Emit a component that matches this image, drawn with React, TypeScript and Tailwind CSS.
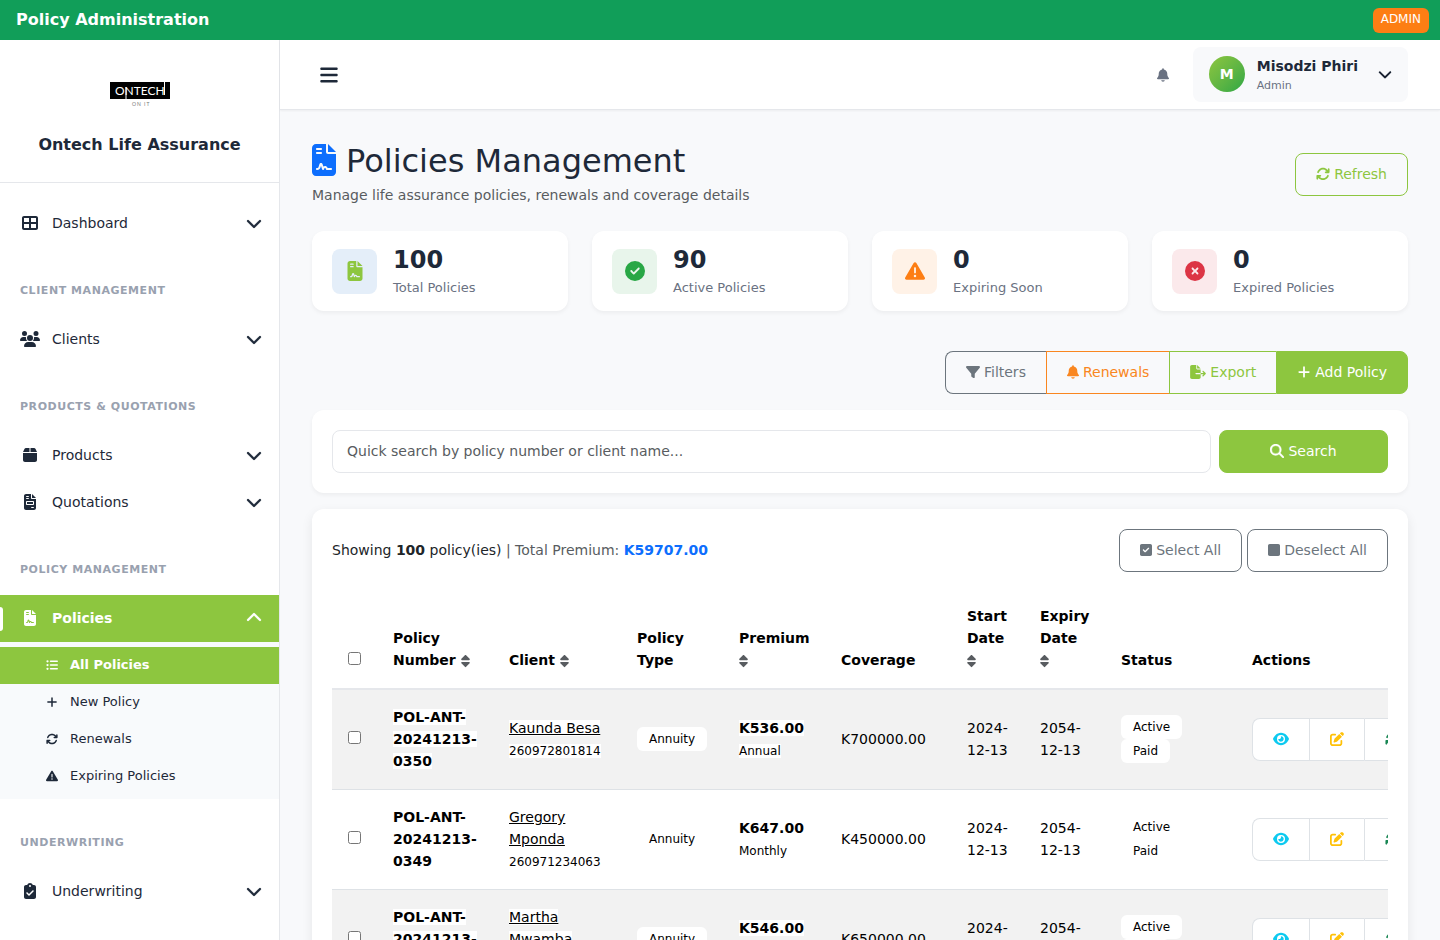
import type { ReactNode } from 'react'
import type { IconType } from 'react-icons'
import {
  FaArrowsRotate,
  FaBars,
  FaBell,
  FaBox,
  FaChevronDown,
  FaChevronUp,
  FaCircleCheck,
  FaCircleXmark,
  FaClipboardCheck,
  FaEye,
  FaFileContract,
  FaFileExport,
  FaFileInvoice,
  FaFilter,
  FaListUl,
  FaMagnifyingGlass,
  FaPenToSquare,
  FaPlus,
  FaSort,
  FaSquare,
  FaSquareCheck,
  FaTableCellsLarge,
  FaTriangleExclamation,
  FaUsers,
} from 'react-icons/fa6'

type Policy = {
  number: string
  client: string
  phone: string
  type: string
  premium: string
  frequency: string
  coverage: string
  start: string
  expiry: string
}

const policies: Policy[] = [
  {
    number: 'POL-ANT-20241213-0350',
    client: 'Kaunda Besa',
    phone: '260972801814',
    type: 'Annuity',
    premium: 'K536.00',
    frequency: 'Annual',
    coverage: 'K700000.00',
    start: '2024-12-13',
    expiry: '2054-12-13',
  },
  {
    number: 'POL-ANT-20241213-0349',
    client: 'Gregory Mponda',
    phone: '260971234063',
    type: 'Annuity',
    premium: 'K647.00',
    frequency: 'Monthly',
    coverage: 'K450000.00',
    start: '2024-12-13',
    expiry: '2054-12-13',
  },
  {
    number: 'POL-ANT-20241213-0348',
    client: 'Martha Mwamba',
    phone: '260977410526',
    type: 'Annuity',
    premium: 'K546.00',
    frequency: 'Monthly',
    coverage: 'K650000.00',
    start: '2024-12-13',
    expiry: '2054-12-13',
  },
]

const stats = [
  { value: '100', label: 'Total Policies', icon: FaFileContract, box: 'bg-[#e4eef9] text-[#8dc63f]' },
  { value: '90', label: 'Active Policies', icon: FaCircleCheck, box: 'bg-[#e8f5eb] text-[#28a745]' },
  { value: '0', label: 'Expiring Soon', icon: FaTriangleExclamation, box: 'bg-[#fff2e7] text-[#fd7e14]' },
  { value: '0', label: 'Expired Policies', icon: FaCircleXmark, box: 'bg-[#fbe9eb] text-[#dc3545]' },
]

const subItems = [
  { label: 'All Policies', icon: FaListUl, active: true },
  { label: 'New Policy', icon: FaPlus, active: false },
  { label: 'Renewals', icon: FaArrowsRotate, active: false },
  { label: 'Expiring Policies', icon: FaTriangleExclamation, active: false },
]

const btn = 'inline-flex h-[43px] items-center justify-center gap-1 border px-5 pb-px text-sm'
const cardShadow = 'shadow-[0_2px_4px_rgba(0,0,0,0.05)]'

// icon boxes follow the glyph widths, narrow glyphs get less room
const iconSm = 'h-[14px] w-3'
const iconMd = 'size-[14px]'
const iconLg = 'h-[14px] w-4'

function Logo() {
  return (
    <svg width="60" height="27" viewBox="0 0 60 27" role="img" aria-label="Ontech">
      <rect width="60" height="17" fill="#000" />
      <text x="5" y="13" fontFamily="Lato, sans-serif" fontSize="12" fill="#fff">
        ONTECH
      </text>
      <path d="M16 5v12M54.5 0v13" stroke="#fff" strokeWidth="1" />
      <text x="22" y="24" fontFamily="Lato, sans-serif" fontSize="5" letterSpacing="1" fill="#777">
        ON IT
      </text>
    </svg>
  )
}

function NavSection({ children }: { children: ReactNode }) {
  return (
    <h3 className="h-[69px] px-5 pt-9 text-[11px] leading-4 font-bold uppercase tracking-wider text-gray-400">
      {children}
    </h3>
  )
}

function NavItem({ icon: Icon, label, active = false }: { icon: IconType; label: string; active?: boolean }) {
  const Chevron = active ? FaChevronUp : FaChevronDown
  return (
    <button
      type="button"
      className={`relative flex h-[47px] w-full items-center gap-3 pl-5 pr-[17px] pb-px text-left text-sm ${
        active ? 'bg-[#8dc63f] font-bold text-white' : 'text-gray-800'
      }`}
    >
      {active && <span className="absolute left-0 top-3 h-6 w-[3px] rounded-r bg-white" />}
      <Icon className="h-4 w-5" />
      <span className="flex-1">{label}</span>
      <Chevron className="size-4 stroke-current stroke-[8]" />
    </button>
  )
}

function Sidebar() {
  return (
    <aside className="w-[280px] shrink-0 overflow-hidden border-r border-gray-200 bg-white">
      <div className="flex flex-col items-center border-b border-gray-200 pt-[42px] pb-[25px]">
        <Logo />
        <h2 className="mt-6 text-base font-bold text-gray-800">Ontech Life Assurance</h2>
      </div>
      <nav className="pt-[17px]">
        <NavItem icon={FaTableCellsLarge} label="Dashboard" />
        <NavSection>Client Management</NavSection>
        <NavItem icon={FaUsers} label="Clients" />
        <NavSection>Products &amp; Quotations</NavSection>
        <NavItem icon={FaBox} label="Products" />
        <NavItem icon={FaFileInvoice} label="Quotations" />
        <NavSection>Policy Management</NavSection>
        <NavItem icon={FaFileContract} label="Policies" active />
        <ul className="bg-[#f8fafc] pt-[5px] pb-1">
          {subItems.map(({ label, icon: Icon, active }) => (
            <li key={label}>
              <a
                href="#"
                className={`flex h-[37px] items-center gap-3 pl-[46px] pb-0.5 text-[13px] ${
                  active ? 'bg-[#8dc63f] font-bold text-white' : 'text-gray-800'
                }`}
              >
                <Icon className="size-3" />
                {label}
              </a>
            </li>
          ))}
        </ul>
        <NavSection>Underwriting</NavSection>
        <NavItem icon={FaClipboardCheck} label="Underwriting" />
      </nav>
    </aside>
  )
}

function Header() {
  return (
    <header className="flex h-[70px] shrink-0 items-center justify-between border-b border-gray-200 bg-white px-8 shadow-xs">
      <button type="button" aria-label="Toggle menu" className="p-2 text-gray-800">
        <FaBars className="h-5 w-[18px]" />
      </button>
      <div className="flex items-center gap-4">
        <button type="button" aria-label="Notifications" className="p-2 text-gray-500">
          <FaBell className={iconSm} />
        </button>
        <button type="button" className="flex h-[55px] items-center rounded-lg bg-[#f8f9fb] px-4 pb-px text-left">
          <span className="flex size-9 items-center justify-center rounded-full bg-linear-135 from-[#8dc63f] to-[#28a745] text-sm font-bold text-white">
            M
          </span>
          <span className="ml-3 pt-0.5">
            <span className="block text-sm leading-[22px] font-bold text-gray-800">Misodzi Phiri</span>
            <span className="block text-[11px] leading-[18px] text-gray-500">Admin</span>
          </span>
          <FaChevronDown className="ml-5 size-[14px] stroke-current stroke-[8] text-gray-900" />
        </button>
      </div>
    </header>
  )
}

function PageTitle() {
  return (
    <div className="flex items-center justify-between">
      <div>
        <h1 className="flex items-center gap-[10px] text-[32px] leading-[38px] text-gray-800">
          <FaFileContract className="mb-0.5 h-8 w-6 text-[#0d6efd]" />
          Policies Management
        </h1>
        <p className="mt-1 text-sm leading-[22px] text-[#585c60]">
          Manage life assurance policies, renewals and coverage details
        </p>
      </div>
      <button type="button" className={`${btn} rounded-lg border-[#8dc63f] text-[#8dc63f]`}>
        <FaArrowsRotate className={iconMd} /> Refresh
      </button>
    </div>
  )
}

function Stats() {
  return (
    <div className="mt-[25px] grid grid-cols-4 gap-6">
      {stats.map(({ value, label, icon: Icon, box }) => (
        <div key={label} className={`flex h-20 items-center gap-4 rounded-xl bg-white px-5 ${cardShadow}`}>
          <div className={`flex size-[45px] items-center justify-center rounded-lg ${box}`}>
            <Icon className="size-5" />
          </div>
          <div>
            <p className="text-2xl leading-[33px] font-bold text-gray-800">{value}</p>
            <p className="text-[13px] leading-[21px] text-gray-500">{label}</p>
          </div>
        </div>
      ))}
    </div>
  )
}

function Toolbar() {
  return (
    <div className="mt-10 flex justify-end">
      <button type="button" className={`${btn} rounded-l-lg border-r-0 border-[#6c757d] text-[#6c757d]`}>
        <FaFilter className={iconMd} /> Filters
      </button>
      <button type="button" className={`${btn} border-r-0 border-[#f98620] text-[#f98620]`}>
        <FaBell className={iconSm} /> Renewals
      </button>
      <button type="button" className={`${btn} border-r-0 border-[#8dc63f] text-[#8dc63f]`}>
        <FaFileExport className={iconLg} /> Export
      </button>
      <button type="button" className={`${btn} rounded-r-lg border-[#8dc63f] bg-[#8dc63f] text-white`}>
        <FaPlus className={iconMd} /> Add Policy
      </button>
    </div>
  )
}

function SearchBar() {
  return (
    <form className={`mt-4 flex gap-2 rounded-xl bg-white p-5 ${cardShadow}`}>
      <input
        type="text"
        aria-label="Quick search"
        placeholder="Quick search by policy number or client name..."
        className="h-[43px] min-w-0 flex-1 rounded-lg border border-gray-200 px-[14px] pb-px text-sm text-gray-800 placeholder:text-[#585c60]"
      />
      <button type="button" className={`${btn} w-[169px] rounded-lg border-[#8dc63f] bg-[#8dc63f] text-white`}>
        <FaMagnifyingGlass className={`${iconMd} stroke-current stroke-[12]`} /> Search
      </button>
    </form>
  )
}

function SortIcon() {
  return <FaSort className="inline h-[14px] w-[9px] text-[#585c60]" />
}

function Badge({ children }: { children: ReactNode }) {
  return <span className="block h-6 rounded-md bg-white px-3 text-xs leading-6">{children}</span>
}

function PolicyRow({ policy }: { policy: Policy }) {
  return (
    <tr className="h-[100px] border-b border-[#dee2e6] odd:bg-[#f2f2f2]">
      <td className="px-4 pb-[3px]">
        <input type="checkbox" aria-label={`Select ${policy.number}`} className="block size-[13px]" />
      </td>
      <td className="px-4">
        <strong className="bg-white">{policy.number}</strong>
      </td>
      <td className="px-4">
        <a href="#" className="bg-white underline">
          {policy.client}
        </a>
        <br />
        <span className="bg-white text-xs">{policy.phone}</span>
      </td>
      <td className="px-4">
        <div className="flex">
          <Badge>{policy.type}</Badge>
        </div>
      </td>
      <td className="px-4">
        <strong className="bg-white">{policy.premium}</strong>
        <br />
        <span className="bg-white text-xs">{policy.frequency}</span>
      </td>
      <td className="px-4">{policy.coverage}</td>
      <td className="px-4">{policy.start}</td>
      <td className="px-4">{policy.expiry}</td>
      <td className="px-4">
        <div className="flex flex-col items-start">
          <Badge>Active</Badge>
          <Badge>Paid</Badge>
        </div>
      </td>
      <td className="px-4">
        <div className="flex">
          <button type="button" aria-label="View" className={`${btn} rounded-l-lg border-r-0 border-[#dee2e6] bg-white text-[#0dcaf0]`}>
            <FaEye className="size-4" />
          </button>
          <button type="button" aria-label="Edit" className={`${btn} border-r-0 border-[#dee2e6] bg-white text-[#ffc107]`}>
            <FaPenToSquare className={iconMd} />
          </button>
          <button type="button" aria-label="Renew" className={`${btn} rounded-r-lg border-[#dee2e6] bg-white text-[#198754]`}>
            <FaArrowsRotate className={iconMd} />
          </button>
        </div>
      </td>
    </tr>
  )
}

function PolicyTable() {
  return (
    <section className="mt-4 rounded-xl bg-white p-5 shadow-[0_4px_12px_rgba(0,0,0,0.08)]">
      <div className="flex items-center justify-between">
        <p className="pb-0.5 text-sm text-[#212529]">
          Showing <strong>100</strong> policy(ies){' '}
          <span className="text-[#585c60]">
            | Total Premium: <strong className="text-[#0d6efd]">K59707.00</strong>
          </span>
        </p>
        <div className="flex gap-[5px]">
          <button type="button" className={`${btn} rounded-lg border-[#6c757d] text-[#6c757d]`}>
            <FaSquareCheck className={iconSm} /> Select All
          </button>
          <button type="button" className={`${btn} rounded-lg border-[#6c757d] text-[#6c757d]`}>
            <FaSquare className={iconSm} /> Deselect All
          </button>
        </div>
      </div>
      <div className="mt-4 overflow-x-auto">
        <table className="w-full min-w-[1104px] table-fixed text-left text-sm leading-[22px] text-black">
          <colgroup>
            <col className="w-[45px]" />
            <col className="w-[116px]" />
            <col className="w-32" />
            <col className="w-[102px]" />
            <col className="w-[102px]" />
            <col className="w-[126px]" />
            <col className="w-[73px]" />
            <col className="w-[81px]" />
            <col className="w-[131px]" />
            <col className="w-[200px]" />
          </colgroup>
          <thead className="border-b-2 border-gray-200 align-bottom">
            <tr className="h-[101px]">
              <th className="px-4 pb-[23px]">
                <input type="checkbox" aria-label="Select all policies" className="block size-[13px]" />
              </th>
              <th className="px-4 pb-[17px]">
                Policy Number <SortIcon />
              </th>
              <th className="px-4 pb-[17px]">
                Client <SortIcon />
              </th>
              <th className="px-4 pb-[17px]">Policy Type</th>
              <th className="px-4 pb-[17px]">
                Premium <SortIcon />
              </th>
              <th className="px-4 pb-[17px]">Coverage</th>
              <th className="px-4 pb-[17px]">
                Start Date <SortIcon />
              </th>
              <th className="px-4 pb-[17px]">
                Expiry Date <SortIcon />
              </th>
              <th className="px-4 pb-[17px]">Status</th>
              <th className="px-4 pb-[17px]">Actions</th>
            </tr>
          </thead>
          <tbody>
            {policies.map((policy) => (
              <PolicyRow key={policy.number} policy={policy} />
            ))}
          </tbody>
        </table>
      </div>
    </section>
  )
}

export default function App() {
  return (
    <div className="flex h-screen flex-col overflow-hidden bg-[#f8f9fb] font-['DejaVu_Sans',sans-serif]">
      <div className="flex h-10 shrink-0 items-center justify-between bg-[#119e59] pl-4 pr-[11px] text-white">
        <span className="text-base font-bold">Policy Administration</span>
        <span className="rounded-md bg-[#fd7e14] px-2 pt-[3px] pb-[6px] text-xs">ADMIN</span>
      </div>
      <div className="flex min-h-0 flex-1">
        <Sidebar />
        <div className="flex min-w-0 flex-1 flex-col">
          <Header />
          <main className="flex-1 overflow-y-auto p-8 [scrollbar-width:none]">
            <PageTitle />
            <Stats />
            <Toolbar />
            <SearchBar />
            <PolicyTable />
          </main>
        </div>
      </div>
    </div>
  )
}
